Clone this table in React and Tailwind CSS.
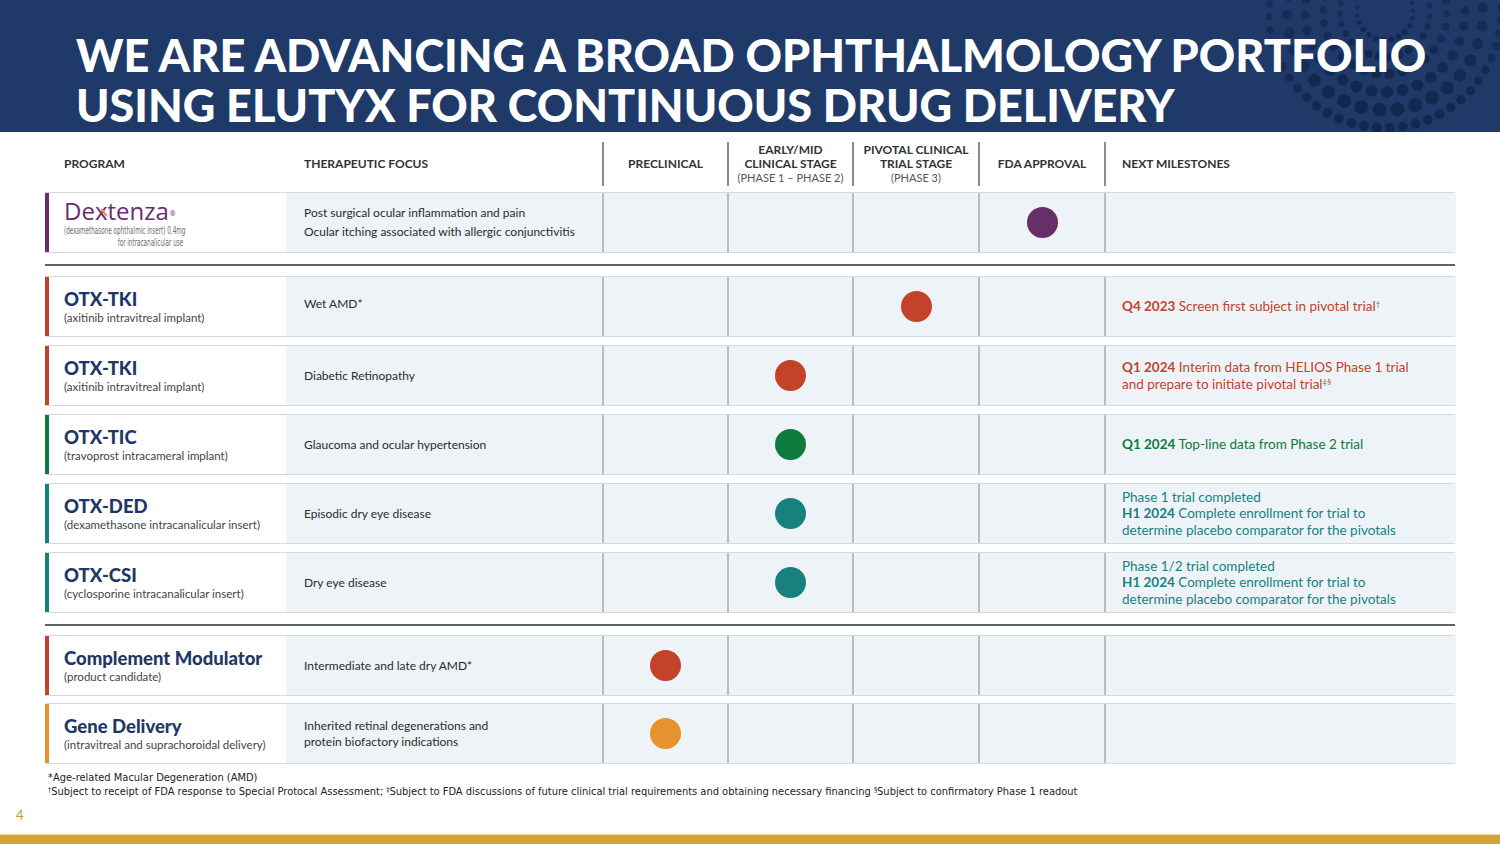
import React from "react";

const COLS = "grid-cols-[241px_316px_125px_125px_126px_126px_352px]";

const rows = [
  {
    group: 0,
    logo: true,
    accent: "border-l-[#6b2d6b]",
    focus: ["Post surgical ocular inflammation and pain", "Ocular itching associated with allergic conjunctivitis"],
    stage: 3,
    dot: "bg-[#682e68]",
  },
  {
    group: 1,
    name: "OTX-TKI",
    sub: "(axitinib intravitreal implant)",
    accent: "border-l-[#c2432a]",
    focus: ["Wet AMD*"],
    focusTop: true,
    stage: 2,
    dot: "bg-[#c2432a]",
    tone: "text-[#c2432a]",
    milestone: [[["Q4 2023", true], [" Screen first subject in pivotal trial", false], ["†", "sup"]]],
  },
  {
    group: 1,
    name: "OTX-TKI",
    sub: "(axitinib intravitreal implant)",
    accent: "border-l-[#c2432a]",
    focus: ["Diabetic Retinopathy"],
    stage: 1,
    dot: "bg-[#c2432a]",
    tone: "text-[#c2432a]",
    milestone: [
      [["Q1 2024", true], [" Interim data from HELIOS Phase 1 trial", false]],
      [["and prepare to initiate pivotal trial", false], ["‡§", "sup"]],
    ],
  },
  {
    group: 1,
    name: "OTX-TIC",
    sub: "(travoprost intracameral implant)",
    accent: "border-l-[#0f7a3d]",
    focus: ["Glaucoma and ocular hypertension"],
    stage: 1,
    dot: "bg-[#0f7a3d]",
    tone: "text-[#0f7a3d]",
    milestone: [[["Q1 2024", true], [" Top-line data from Phase 2 trial", false]]],
  },
  {
    group: 1,
    name: "OTX-DED",
    sub: "(dexamethasone intracanalicular insert)",
    accent: "border-l-[#17817f]",
    focus: ["Episodic dry eye disease"],
    stage: 1,
    dot: "bg-[#17817f]",
    tone: "text-[#17817f]",
    milestone: [
      [["Phase 1 trial completed", false]],
      [["H1 2024", true], [" Complete enrollment for trial to", false]],
      [["determine placebo comparator for the pivotals", false]],
    ],
  },
  {
    group: 1,
    name: "OTX-CSI",
    sub: "(cyclosporine intracanalicular insert)",
    accent: "border-l-[#17817f]",
    focus: ["Dry eye disease"],
    stage: 1,
    dot: "bg-[#17817f]",
    tone: "text-[#17817f]",
    milestone: [
      [["Phase 1/2 trial completed", false]],
      [["H1 2024", true], [" Complete enrollment for trial to", false]],
      [["determine placebo comparator for the pivotals", false]],
    ],
  },
  {
    group: 2,
    name: "Complement Modulator",
    sub: "(product candidate)",
    accent: "border-l-[#c2432a]",
    focus: ["Intermediate and late dry AMD*"],
    stage: 0,
    dot: "bg-[#c2432a]",
  },
  {
    group: 2,
    name: "Gene Delivery",
    sub: "(intravitreal and suprachoroidal delivery)",
    accent: "border-l-[#e8912f]",
    focus: ["Inherited retinal degenerations and", "protein biofactory indications"],
    stage: 0,
    dot: "bg-[#e8912f]",
  },
];

function HeaderDots() {
  const dots = [];
  const cx = 1385;
  const cy = 12;
  const rings = [
    { r: 28, size: 3 },
    { r: 45, size: 4 },
    { r: 62, size: 5 },
    { r: 80, size: 6 },
    { r: 98, size: 7 },
    { r: 116, size: 5 },
  ];
  rings.forEach((ring, ri) => {
    const step = (ring.size * 2.6) / ring.r;
    for (let a = -0.6; a < Math.PI + 0.3; a += step) {
      const x = cx + ring.r * Math.cos(a);
      const y = cy + ring.r * Math.sin(a);
      if (y < -8 || y > 140) continue;
      const fade = 0.35 + 0.65 * Math.max(0, Math.sin(a));
      dots.push(
        <circle key={ri + "-" + a.toFixed(3)} cx={x - 1200} cy={y} r={ring.size * (0.55 + 0.45 * fade)} fill="#132851" opacity={0.55 + 0.45 * fade} />
      );
    }
  });
  return (
    <svg className="absolute right-0 top-0" width="300" height="132" viewBox="0 0 300 132">
      {dots}
    </svg>
  );
}

function DextenzaLogo() {
  return (
    <div className="flex flex-col items-start leading-none">
      <div className="relative text-[24px] leading-[26px] text-[#6a2c70]" style={{ fontFamily: "'Open Sans', sans-serif" }}>
        Dex<span className="relative">t<span className="absolute left-[-4px] top-[14px] h-[9px] w-[2px] rotate-[-35deg] bg-[#e8912f]" /></span>enza
        <sup className="ml-[1px] text-[7px]">®</sup>
      </div>
      <div className="flex w-[119px] flex-col items-end text-[10.5px] leading-[12px] text-[#6b6b6b]" style={{ fontFamily: "'Liberation Sans Narrow', 'DejaVu Sans Condensed', sans-serif" }}>
        <span className="inline-block self-start origin-left scale-x-[0.6] whitespace-nowrap">(dexamethasone ophthalmic insert) 0.4mg</span>
        <span className="inline-block origin-right scale-x-[0.6] whitespace-nowrap">for intracanalicular use</span>
      </div>
    </div>
  );
}

function Row({ row }) {
  return (
    <div className={`grid ${COLS} h-[61px] border-y border-[#d4d9df]`}>
      <div className={`flex flex-col justify-center border-l-4 ${row.accent} bg-white pl-[15px]`}>
        {row.logo ? (
          <DextenzaLogo />
        ) : (
          <>
            <div className="text-[18.5px] font-black leading-[22px] text-[#1f3766]">{row.name}</div>
            <div className="text-[11.5px] leading-[16px] text-[#444]">{row.sub}</div>
          </>
        )}
      </div>
      <div className={`flex flex-col ${row.focusTop ? "justify-start pt-[19px]" : "justify-center"} bg-[#eef3f8] pl-[18px] text-[12px] leading-[16px] text-[#2b2b2b]`}>
        {row.focus.map((f, i) => (
          <div key={i} className={row.logo && i === 1 ? "mt-[3px]" : ""}>{f}</div>
        ))}
      </div>
      {[0, 1, 2, 3].map((s) => (
        <div key={s} className="flex items-center justify-center border-l-2 border-[#b9bec4] bg-[#eef3f8]">
          {row.stage === s ? <div className={`h-[31px] w-[31px] rounded-full ${row.dot}`} /> : null}
        </div>
      ))}
      <div className={`flex flex-col justify-center border-l-2 border-[#b9bec4] bg-[#eef3f8] pl-[16px] text-[13.5px] leading-[16.5px] ${row.tone || ""}`}>
        {(row.milestone || []).map((line, i) => (
          <div key={i} className="whitespace-nowrap">
            {line.map(([t, b], j) =>
              b === "sup" ? (
                <sup key={j} className="text-[8px]">{t}</sup>
              ) : (
                <span key={j} className={b ? "font-bold" : ""}>{t}</span>
              )
            )}
          </div>
        ))}
      </div>
    </div>
  );
}

export default function App() {
  const g0 = rows.filter((r) => r.group === 0);
  const g1 = rows.filter((r) => r.group === 1);
  const g2 = rows.filter((r) => r.group === 2);
  return (
    <div className="relative flex h-[844px] w-[1500px] flex-col overflow-hidden bg-white" style={{ fontFamily: "Lato, 'Open Sans', sans-serif" }}>
      <div className="relative h-[132px] shrink-0 overflow-hidden bg-[#1f3a68]">
        <HeaderDots />
        <h1 className="relative whitespace-nowrap pl-[76px] pt-[30px] text-[45px] font-black uppercase leading-[50px] text-white">
          <div>We are advancing a broad ophthalmology portfolio</div>
          <div>using Elutyx for continuous drug delivery</div>
        </h1>
      </div>

      <div className="px-[45px]">
        <div className={`mt-[10px] grid ${COLS} h-[44px] text-[12px] font-bold uppercase leading-[14px] text-[#333]`}>
          <div className="flex items-center pl-[19px]">Program</div>
          <div className="flex items-center pl-[18px]">Therapeutic Focus</div>
          <div className="flex items-center justify-center border-l-2 border-[#8c8c8c]">Preclinical</div>
          <div className="flex flex-col items-center justify-center border-l-2 border-[#8c8c8c] text-center">
            <span>Early/Mid</span>
            <span>Clinical Stage</span>
            <span className="text-[11px] font-normal text-[#555]">(Phase 1 – Phase 2)</span>
          </div>
          <div className="flex flex-col items-center justify-center border-l-2 border-[#8c8c8c] text-center">
            <span>Pivotal Clinical</span>
            <span>Trial Stage</span>
            <span className="text-[11px] font-normal text-[#555]">(Phase 3)</span>
          </div>
          <div className="flex items-center justify-center border-l-2 border-[#8c8c8c]">FDA Approval</div>
          <div className="flex items-center border-l-2 border-[#8c8c8c] pl-[16px]">Next Milestones</div>
        </div>

        <div className="mt-[6px] flex flex-col gap-[8px]">
          {g0.map((r, i) => (
            <Row key={i} row={r} />
          ))}
        </div>

        <div className="mt-[11px] h-[2px] bg-[#5f6368]" />

        <div className="mt-[10px] flex flex-col gap-[8px]">
          {g1.map((r, i) => (
            <Row key={i} row={r} />
          ))}
        </div>

        <div className="mt-[11px] h-[2px] bg-[#5f6368]" />

        <div className="mt-[9px] flex flex-col gap-[7px]">
          {g2.map((r, i) => (
            <Row key={i} row={r} />
          ))}
        </div>

        <div className="mt-[7px] pl-[3px] text-[11px] leading-[14px] text-[#222]" style={{ fontFamily: "'Liberation Sans Narrow', 'DejaVu Sans Condensed', sans-serif" }}>
          <div>*Age-related Macular Degeneration (AMD)</div>
          <div>
            <sup className="text-[7px]">†</sup>Subject to receipt of FDA response to Special Protocal Assessment; <sup className="text-[7px]">‡</sup>Subject to FDA discussions of future clinical trial requirements and obtaining necessary financing <sup className="text-[7px]">§</sup>Subject to confirmatory Phase 1 readout
          </div>
        </div>
      </div>

      <div className="ml-[16px] mt-[7px] text-[13px] text-[#c99a2e]">4</div>

      <div className="absolute bottom-0 left-0 h-[10px] w-full border-t border-[#ecd7a0] bg-[#d3a436]" />
    </div>
  );
}
